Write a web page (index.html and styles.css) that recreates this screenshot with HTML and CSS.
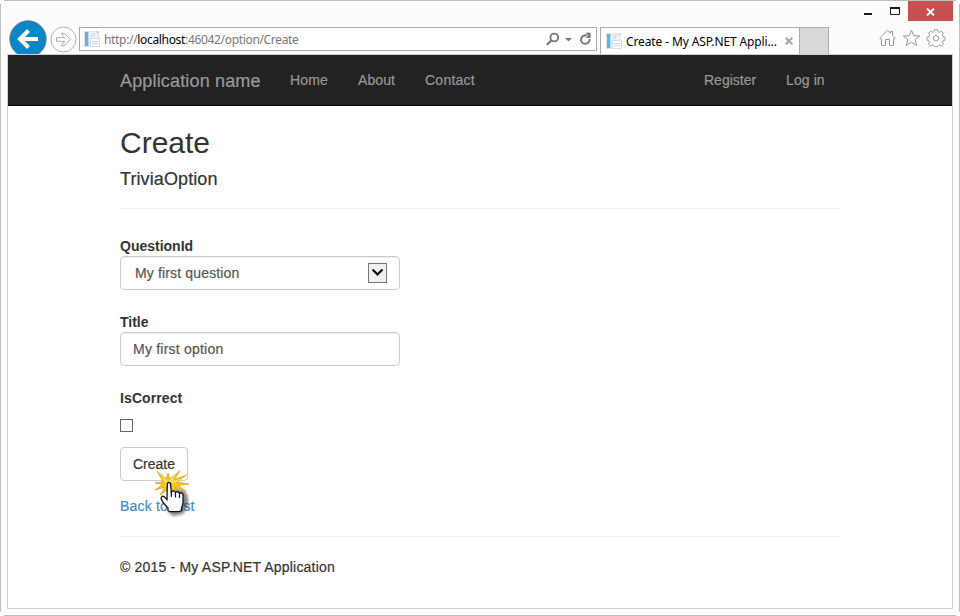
FILE: index.html
```html
<!DOCTYPE html>
<html lang="en">
<head>
<meta charset="utf-8">
<title>Create - My ASP.NET Application</title>
<link rel="stylesheet" href="styles.css">
</head>
<body>
<div class="window">
  <div class="titlebar">
    <svg class="minimize" width="8" height="3"><rect width="8" height="2" fill="#1a1a1a"/></svg>
    <svg class="maximize" width="10" height="8"><path d="M.5 1V7.5H9.5V1" fill="none" stroke="#1a1a1a"/><rect width="10" height="2" fill="#1a1a1a"/></svg>
    <div class="close"><svg width="9" height="8" viewBox="0 0 9 8"><path d="M1 .5 8 7.5M8 .5 1 7.5" stroke="#fff" stroke-width="1.8"/></svg></div>
  </div>
  <div class="toolbar">
    <svg class="back" width="40" height="34" viewBox="0 0 40 34">
      <circle cx="20" cy="19" r="18.2" fill="#0786c8" stroke="#77797b" stroke-width="1"/>
      <path d="M30 19H13M20.5 10.500 12 19l8.500 8.500" fill="none" stroke="#fff" stroke-width="4"/>
    </svg>
    <svg class="forward" width="27" height="27" viewBox="0 0 27 27">
      <circle cx="13.500" cy="13.500" r="12.500" fill="#fcfcfc" stroke="#b0b0b0"/>
      <path d="M6.500 11.700H15L11.700 8.400V7.300H14.200L20.300 13.500 14.200 19.700H11.700V18.600L15 15.300H6.500Z" fill="#fff" stroke="#aaa"/>
    </svg>
    <div class="address">
      <svg class="page-icon" width="16" height="16" viewBox="0 0 16 16">
        <rect x=".5" y=".5" width="14" height="15" fill="#edf1f5" stroke="#e1e5e9"/>
        <rect x="1" y="1" width="3" height="14" fill="#67afdf"/><rect x="4" y="1" width="1" height="14" fill="#b8d9f0"/>
        <path d="M7 3h4M7 5h3" stroke="#cbd6e0"/><path d="M6.500 7.500h9v8h-9z" fill="#f8fafc" stroke="#d4dbe3"/><path d="M8 10.500h6M8 12.500h6" stroke="#cbd6e0"/>
        <path d="M11 0h4v4z" fill="#d0dbe5"/>
      </svg>
      <span class="url">http://<b>localhost</b>:46042/option/Create</span>
      <svg class="address-tools" width="46" height="16" viewBox="0 0 46 16">
        <circle cx="8.300" cy="6.500" r="3.900" fill="none" stroke="#777" stroke-width="1.800"/><path d="M5.300 9.500 .8 13.700" stroke="#777" stroke-width="2.200"/>
        <path d="M19 7h7l-3.500 3.500z" fill="#777"/>
        <path d="M43.600 8A4.300 4.300 0 1 1 40.800 4.500" fill="none" stroke="#777" stroke-width="1.900"/><path d="M40 1.500 44.600 1.800V7H39.700L42 4.800Z" fill="#777"/>
      </svg>
    </div>
    <div class="tab">
      <svg class="page-icon" width="16" height="16" viewBox="0 0 16 16">
        <rect x=".5" y=".5" width="14" height="15" fill="#edf1f5" stroke="#e1e5e9"/>
        <rect x="1" y="1" width="3" height="14" fill="#67afdf"/><rect x="4" y="1" width="1" height="14" fill="#b8d9f0"/>
        <path d="M7 3h4M7 5h3" stroke="#cbd6e0"/><path d="M6.500 7.500h9v8h-9z" fill="#f8fafc" stroke="#d4dbe3"/><path d="M8 10.500h6M8 12.500h6" stroke="#cbd6e0"/>
        <path d="M11 0h4v4z" fill="#d0dbe5"/>
      </svg>
      <span class="tab-title">Create - My ASP.NET Appli...</span>
      <svg class="tab-close" width="8" height="8" viewBox="0 0 8 8"><path d="M.7.7 7.300 7.300M7.300.7.7 7.300" stroke="#a6a6a6" stroke-width="2"/></svg>
    </div>
    <div class="new-tab"></div>
    <svg class="tools" width="68" height="18" viewBox="0 0 68 18" fill="#fff" stroke="#999">
      <path d="M2.500 9.800V16.500H6.500V10.500H10.500V16.500H14.500V9.800L15.300 10 16.300 9 13.500 6.200V2.500H11.500V4.200L8.500 1.300.7 9 1.700 10Z"/>
      <path d="M32.500 1 34.700 6.700 40.700 7 36 10.700 37.700 16.500 32.500 13.200 27.300 16.500 29 10.700 24.300 7 30.300 6.700Z"/>
      <path d="M55.500 1.500h3l.6 2 1.400.6 1.900-1.100 2.100 2.100-1.100 1.900.6 1.400 2 .6v3l-2 .6-.6 1.400 1.100 1.900-2.100 2.100-1.900-1.100-1.400.6-.4 1h-3.400l-.4-1-1.400-.6-1.900 1.100-2.100-2.100 1.100-1.900-.6-1.400-2-.6v-3l2-.6.6-1.400-1.100-1.900 2.100-2.100 1.900 1.100 1.400-.6z" transform="translate(0 -.8)"/>
      <circle cx="57" cy="9.200" r="2.600"/>
    </svg>
  </div>
  <div class="page">
    <nav class="navbar">
      <div class="container nav-row">
        <a class="brand">Application name</a>
        <a class="home">Home</a><a class="about">About</a><a class="contact">Contact</a>
        <a class="register">Register</a><a class="login">Log in</a>
      </div>
    </nav>
    <main class="container">
      <h2>Create</h2>
      <h4>TriviaOption</h4>
      <hr>
      <form>
        <label>QuestionId</label>
        <div class="control select"><span class="v-question">My first question</span>
          <span class="arrow"><svg width="13" height="9" viewBox="0 0 13 9"><path d="M1.500 1.500 6.500 6.500 11.500 1.500" fill="none" stroke="#000" stroke-width="2.200"/></svg></span>
        </div>
        <label>Title</label>
        <div class="control"><span class="v-title">My first option</span></div>
        <label class="l-correct">IsCorrect</label>
        <div class="checkbox"></div>
        <div class="submit"><span>Create</span>
          <svg class="pointer" width="50" height="56" viewBox="0 0 50 56">
            <defs><filter id="soft" x="-50%" y="-50%" width="200%" height="200%"><feGaussianBlur stdDeviation="1.8"/></filter></defs>
            <path d="M21 18l12 3 3 6v9l-5 8-10 2-5-4z" fill="#333" opacity=".6" filter="url(#soft)"/>
            <path d="M5 1 14 9 16 3 18 9 28 .5 22.500 9.500 34.500 5 25 11.800 37 14 26 15.500 34 21.500 23 17.500 25 24 18 18 8 25 12.500 17.500 3 20 10.500 14.500 3 13 11 11.800Z" fill="#f5c51d" stroke="#d9a412" stroke-width=".7"/>
            <path d="M9 5.500 16 11.500 24.500 4.500 20 11.500 29 8.500 22 13.500 18 13 12 17.500 14 13.500Z" fill="#fce06a"/>
            <path d="M15.300 13.500Q16.800 11.300 18.500 13.500L19.300 22Q22 19.700 23.500 22.500 26 20.500 27.500 23.500 30 21.500 31 25V33.500L29.500 38V40.500L27 41.700H17.500L16 40.500V38L11.500 33 9 28.500Q9.500 25.500 12 26.500L15 29.500Z" fill="#fff" stroke="#111" stroke-width="1.300"/>
            <path d="M19.300 21V27M23.500 22.500V27.500M27.500 23.500V28" stroke="#111" stroke-width="1.200"/>
          </svg>
        </div>
      </form>
      <a class="back-link">Back to List</a>
      <hr class="footer-rule">
      <footer>© 2015 - My ASP.NET Application</footer>
    </main>
  </div>
</div>
</body>
</html>
```
FILE: styles.css
```css
* { box-sizing: border-box; }
body { margin: 0; background: #fff; font: 14px/20px "Liberation Sans", Arial, sans-serif; color: #333; }
svg { display: block; flex: none; }
.window {
  width: 960px; height: 616px; padding: 1px 7px 7px; display: flex; flex-direction: column;
  background:
    linear-gradient(#bdbdbd, #bdbdbd) 4px 0 / 952px 1px no-repeat,
    linear-gradient(#bdbdbd, #bdbdbd) 4px 615px / 952px 1px no-repeat,
    linear-gradient(#bdbdbd, #bdbdbd) 0 4px / 1px 608px no-repeat,
    linear-gradient(#bdbdbd, #bdbdbd) 959px 4px / 1px 608px no-repeat,
    #fcfcfc;
}
.titlebar { height: 19px; display: flex; justify-content: flex-end; align-items: flex-start; }
.minimize { margin: 12px 18px 0 0; }
.maximize { margin: 6px 8px 0 0; }
.close { width: 45px; height: 20px; background: #c75050; display: flex; align-items: center; justify-content: center; padding-top: 1px; }
.toolbar { height: 34px; display: flex; align-items: flex-start; font: 12px/16px "Noto Sans", sans-serif; white-space: nowrap; }
.back { margin-left: 1px; }
.forward { margin: 6px 0 0 2px; }
.address { margin: 7px 0 0 2px; width: 518px; height: 24px; border: 1px solid #aaa; background: #fff; display: flex; align-items: center; padding-left: 4px; }
.url { margin: 2px 0 0 4px; color: #777; letter-spacing: -.33px; }
.url b { font-weight: 400; color: #000; }
.address-tools { margin-left: auto; margin-right: 4px; }
.tab { margin: 7px 0 0 3px; width: 200px; height: 27px; border: 1px solid #aaa; border-bottom: 0; background: #fff; display: flex; align-items: center; padding-left: 5px; color: #000; }
.tab-title { margin: 2px 0 0 4px; letter-spacing: -.12px; }
.tab-close { margin-left: auto; margin-right: 6px; }
.new-tab { margin-top: 7px; width: 29px; height: 27px; background: #d9d9d9; border: solid #aaa; border-width: 1px 1px 0 0; }
.tools { margin: 9px 0 0 50px; }
.page { width: 946px; height: 555px; border: 1px solid #d0d0d0; background: #fff; -webkit-text-stroke: .2px; }
.navbar { height: 51px; background: #222; border-bottom: 1px solid #080808; }
.container { width: 720px; margin: 0 auto 0 112px; }
.nav-row { display: flex; height: 50px; align-items: center; color: #999; white-space: nowrap; }
.brand { font-size: 18px; width: 170px; letter-spacing: .16px; padding-top: 1px; }
.home { width: 68px; letter-spacing: .15px; }
.about { width: 67px; letter-spacing: .1px; }
.contact { letter-spacing: .25px; }
.register { margin-left: auto; width: 82px; }
.login { width: 54px; letter-spacing: .1px; }
h2 { font-size: 30px; line-height: 33px; font-weight: 400; margin: 20px 0 10px; -webkit-text-stroke: 0; }
h4 { font-size: 18px; line-height: 20px; font-weight: 400; margin: 0 0 19px; letter-spacing: .1px; }
hr { height: 1px; border: 0; background: #eee; margin: 0; }
form { display: flex; flex-direction: column; align-items: flex-start; padding-top: 27px; }
label { font-weight: 700; line-height: 20px; -webkit-text-stroke: 0; }
.l-correct { letter-spacing: .1px; }
.control { width: 280px; height: 34px; border: 1px solid #ccc; border-radius: 4px; box-shadow: inset 0 1px 1px rgba(0,0,0,.075); padding: 0 12px; display: flex; align-items: center; justify-content: space-between; color: #555; margin-bottom: 22px; }
.select { padding-left: 14px; }
.v-question { letter-spacing: .15px; }
.v-title { letter-spacing: .22px; }
.arrow { width: 19px; height: 20px; border: 1px solid #777; background: #f0f0f0; display: flex; align-items: center; justify-content: center; padding-bottom: 2px; }
.checkbox { width: 13px; height: 13px; border: 1px solid #666; margin: 11px 0 15px; }
.submit { position: relative; width: 68px; height: 34px; border: 1px solid #ccc; border-radius: 4px; padding: 6px 12px; white-space: nowrap; }
.pointer { position: absolute; left: 31px; top: 22px; }
.back-link { display: block; color: #428bca; margin-top: 15px; letter-spacing: .18px; }
.footer-rule { margin: 20px 0; }
footer { letter-spacing: .19px; }
```
